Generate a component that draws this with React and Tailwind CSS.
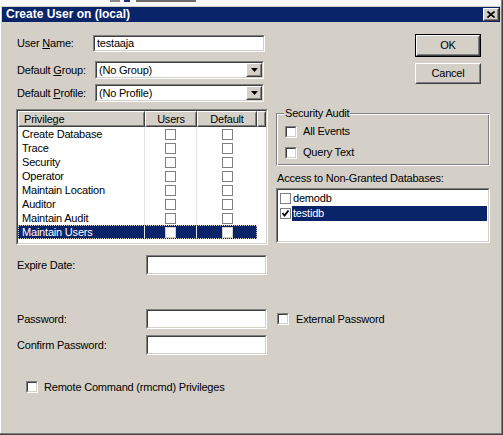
import React from "react";

const sunkOuter = "border border-t-[#808080] border-l-[#808080] border-b-white border-r-white";
const sunkInner = "border border-t-[#404040] border-l-[#404040] border-b-[#d4d0c8] border-r-[#d4d0c8]";
const raisedOuter = "border border-t-white border-l-white border-b-[#404040] border-r-[#404040]";
const raisedInner = "border border-t-[#d4d0c8] border-l-[#d4d0c8] border-b-[#808080] border-r-[#808080]";

function Field({ className = "", children }) {
  return (
    <div className={`${sunkOuter} ${className}`}>
      <div className={`${sunkInner} bg-white h-full flex items-center`}>{children}</div>
    </div>
  );
}

function Select({ value, className = "" }) {
  return (
    <div className={`${sunkOuter} ${className}`}>
      <div className={`${sunkInner} bg-white h-full flex items-center`}>
        <span className="flex-1 pl-[2px]">{value}</span>
        <div className={`${raisedOuter} w-[16px] h-full bg-[#d4d0c8]`}>
          <div className={`${raisedInner} w-full h-full flex items-center justify-center`}>
            <svg width="7" height="4" viewBox="0 0 7 4">
              <polygon points="0,0 7,0 3.5,4" fill="black" />
            </svg>
          </div>
        </div>
      </div>
    </div>
  );
}

function Check({ checked = false }) {
  return (
    <div className={`w-[12px] h-[12px] shrink-0 ${sunkOuter}`}>
      <div className={`${sunkInner} bg-white w-full h-full flex items-center justify-center`}>
        {checked && (
          <svg width="8" height="8" viewBox="0 0 8 8">
            <path d="M1 3.5 L3 5.5 L7 1.5" stroke="black" strokeWidth="1.6" fill="none" />
          </svg>
        )}
      </div>
    </div>
  );
}

function FlatBox({ checked = false, light = false }) {
  return (
    <div
      className={`w-[11px] h-[11px] shrink-0 border ${light ? "border-[#d4d0c8]" : "border-[#808080]"} bg-white flex items-center justify-center`}
    >
      {checked && (
        <svg width="9" height="9" viewBox="0 0 9 9">
          <path d="M1.5 4 L3.5 6.5 L7.5 1.5" stroke="black" strokeWidth="1.8" fill="none" />
        </svg>
      )}
    </div>
  );
}

function Button({ children, isDefault = false }) {
  const inner = (
    <div className={`${raisedOuter} w-full h-full bg-[#d4d0c8]`}>
      <div className={`${raisedInner} w-full h-full flex items-center justify-center`}>{children}</div>
    </div>
  );
  return isDefault ? (
    <div className="w-[66px] h-[23px] border border-black">{inner}</div>
  ) : (
    <div className="w-[66px] h-[21px]">{inner}</div>
  );
}

const privileges = [
  "Create Database",
  "Trace",
  "Security",
  "Operator",
  "Maintain Location",
  "Auditor",
  "Maintain Audit",
  "Maintain Users",
];

function HeaderCell({ children, className = "" }) {
  return (
    <div className={`${raisedOuter} h-full bg-[#d4d0c8] ${className}`}>
      <div className="border border-t-[#d4d0c8] border-l-[#d4d0c8] border-b-[#808080] border-r-[#808080] h-full flex items-center">
        {children}
      </div>
    </div>
  );
}

export default function App() {
  return (
    <div className="w-[503px] h-[435px] font-['Liberation_Sans',Arial,sans-serif] text-[11px] leading-[13px] tracking-[-0.2px] text-black border-r border-b border-[#404040] bg-[#d4d0c8]">
      <div className="h-full border-r border-b border-r-[#808080] border-b-[#808080] flex flex-col">
        {/* strip from window behind */}
        <div className="h-[6px] bg-[#f8f8f8] flex items-start pl-[110px] gap-[4px]">
          <div className="w-[10px] h-[2px] bg-[#8a8a8a]" />
          <div className="w-[6px] h-[2px] bg-[#1c2f7a]" />
          <div className="w-[60px] h-[2px] bg-[#6a6a6a] ml-[2px]" />
        </div>
        <div className="flex-1 flex flex-col border-l border-l-white pl-[1px] pr-[1px] pt-[1px]">
          {/* title bar */}
          <div className="h-[15px] bg-[#0a246a] flex items-center justify-between pl-[4px] pr-[1px]">
            <span className="text-white font-bold text-[12px] leading-[13px] tracking-normal">Create User on (local)</span>
            <div className={`${raisedOuter} w-[16px] h-[13px] bg-[#d4d0c8]`}>
              <div className={`${raisedInner} w-full h-full flex items-center justify-center`}>
                <svg width="8" height="7" viewBox="0 0 8 7">
                  <path d="M0.5 0.5 L7.5 6.5 M7.5 0.5 L0.5 6.5" stroke="black" strokeWidth="1.6" />
                </svg>
              </div>
            </div>
          </div>

          {/* body */}
          <div className="flex flex-col pl-[14px]">
            {/* Section A */}
            <div className="flex mt-[13px]">
              <div className="flex flex-col w-[249px]">
                <div className="flex items-center h-[17px]">
                  <span className="w-[77px] pl-[1px]">
                    User <span className="underline">N</span>ame:
                  </span>
                  <Field className="w-[172px] h-[17px]">
                    <span className="pl-[2px]">testaaja</span>
                  </Field>
                </div>
                <div className="flex items-center h-[18px] mt-[9px]">
                  <span className="w-[79px] pl-[1px]">
                    Default <span className="underline">G</span>roup:
                  </span>
                  <Select value="(No Group)" className="w-[169px] h-[18px]" />
                </div>
                <div className="flex items-center h-[18px] mt-[5px]">
                  <span className="w-[79px] pl-[1px]">
                    Default <span className="underline">P</span>rofile:
                  </span>
                  <Select value="(No Profile)" className="w-[169px] h-[18px]" />
                </div>
              </div>
              <div className="flex flex-col ml-[150px] gap-[6px] -mt-[1px]">
                <Button isDefault>OK</Button>
                <Button>Cancel</Button>
              </div>
            </div>

            {/* Section B */}
            <div className="flex mt-[7px]">
              <div className={`${sunkOuter} w-[252px] h-[136px]`}>
                <div className={`${sunkInner} bg-white h-full flex flex-col`}>
                  <div className="flex h-[16px] shrink-0">
                    <HeaderCell className="w-[127px]">
                      <span className="pl-[4px]">Privilege</span>
                    </HeaderCell>
                    <HeaderCell className="w-[52px]">
                      <span className="w-full text-center">Users</span>
                    </HeaderCell>
                    <HeaderCell className="w-[60px]">
                      <span className="w-full text-center">Default</span>
                    </HeaderCell>
                    <HeaderCell className="flex-1" />
                  </div>
                  {privileges.map((p, i) => {
                    const sel = i === privileges.length - 1;
                    return (
                      <div key={p} className="flex h-[14px] shrink-0">
                        <div
                          className={`flex w-[239px] h-full ${sel ? "bg-[#0a246a] text-white outline-1 outline-dotted outline-[#d4d0c8] -outline-offset-1" : ""}`}
                        >
                          <div className="w-[127px] pl-[4px] flex items-center border-r border-[#e4e4e4]">{p}</div>
                          <div className="w-[52px] flex items-center justify-center border-r border-[#e4e4e4]">
                            <FlatBox light={sel} />
                          </div>
                          <div className="w-[60px] flex items-center justify-center">
                            <FlatBox light={sel} />
                          </div>
                        </div>
                      </div>
                    );
                  })}
                </div>
              </div>

              <div className="flex flex-col ml-[8px] w-[214px]">
                <fieldset className="border border-t-[#808080] border-l-[#808080] border-b-white border-r-white shadow-[inset_1px_1px_0_white,inset_-1px_-1px_0_#808080] h-[58px] px-[8px] -mt-[1px]">
                  <legend className="px-[1px] ml-[-1px] bg-[#d4d0c8] leading-[11px]">Security Audit</legend>
                  <div className="flex items-center gap-[6px] mt-[6px]">
                    <Check />
                    <span>All Events</span>
                  </div>
                  <div className="flex items-center gap-[6px] mt-[8px]">
                    <Check />
                    <span>Query Text</span>
                  </div>
                </fieldset>
                <span className="mt-[6px] pl-[1px]">Access to Non-Granted Databases:</span>
                <div className={`${sunkOuter} h-[55px] mt-[3px]`}>
                  <div className={`${sunkInner} bg-white h-full flex flex-col pt-[1px] pl-[2px] pr-[1px]`}>
                    <div className="flex items-center h-[15px] gap-[1px]">
                      <FlatBox />
                      <span className="pl-[1px]">demodb</span>
                    </div>
                    <div className="flex items-center h-[15px] gap-[1px]">
                      <FlatBox checked />
                      <span className="flex-1 h-full flex items-center pl-[1px] bg-[#0a246a] text-white">testidb</span>
                    </div>
                  </div>
                </div>
              </div>
            </div>

            {/* Section C */}
            <div className="flex items-center h-[20px] mt-[10px]">
              <span className="w-[130px] pl-[1px]">Expire Date:</span>
              <Field className="w-[121px] h-[20px]" />
            </div>
            <div className="flex items-center h-[20px] mt-[34px]">
              <span className="w-[130px] pl-[1px]">Password:</span>
              <Field className="w-[121px] h-[20px]" />
              <div className="flex items-center ml-[10px] gap-[7px]">
                <Check />
                <span>External Password</span>
              </div>
            </div>
            <div className="flex items-center h-[20px] mt-[6px]">
              <span className="w-[130px] pl-[1px]">Confirm Password:</span>
              <Field className="w-[121px] h-[20px]" />
            </div>
            <div className="flex items-center h-[12px] mt-[26px] ml-[10px] gap-[6px]">
              <Check />
              <span>Remote Command (rmcmd) Privileges</span>
            </div>
          </div>
        </div>
      </div>
    </div>
  );
}
